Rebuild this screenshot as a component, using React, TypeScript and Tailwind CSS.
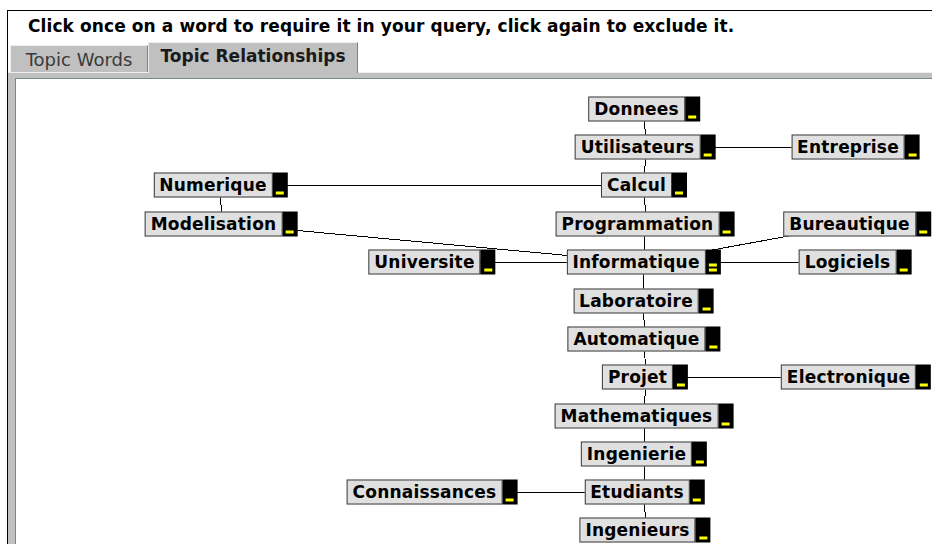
const FONT = { fontFamily: '"DejaVu Sans", "Liberation Sans", sans-serif' };

type Node = { id: string; label: string; x: number; y: number; double?: boolean };

// page coordinates of each node's centre; the canvas starts at (16, 79)
const nodes: Node[] = [
  { id: "don", label: "Donnees", x: 644, y: 109 },
  { id: "uti", label: "Utilisateurs", x: 645, y: 147 },
  { id: "ent", label: "Entreprise", x: 855.5, y: 147 },
  { id: "cal", label: "Calcul", x: 644, y: 185 },
  { id: "num", label: "Numerique", x: 220.5, y: 185 },
  { id: "mod", label: "Modelisation", x: 221, y: 223.5 },
  { id: "pro", label: "Programmation", x: 645, y: 223.5 },
  { id: "bur", label: "Bureautique", x: 857, y: 223.5 },
  { id: "uni", label: "Universite", x: 432, y: 262 },
  { id: "inf", label: "Informatique", x: 643.5, y: 262, double: true },
  { id: "log", label: "Logiciels", x: 855, y: 262 },
  { id: "lab", label: "Laboratoire", x: 643.5, y: 300.5 },
  { id: "aut", label: "Automatique", x: 644, y: 338.5 },
  { id: "prj", label: "Projet", x: 645, y: 377 },
  { id: "ele", label: "Electronique", x: 856, y: 377 },
  { id: "mat", label: "Mathematiques", x: 644, y: 415.5 },
  { id: "ing", label: "Ingenierie", x: 644, y: 453.5 },
  { id: "con", label: "Connaissances", x: 432, y: 492 },
  { id: "etu", label: "Etudiants", x: 644.5, y: 492 },
  { id: "igs", label: "Ingenieurs", x: 645, y: 530 },
];

const edges: [string, string][] = [
  ["don", "uti"],
  ["uti", "ent"],
  ["uti", "cal"],
  ["cal", "num"],
  ["num", "mod"],
  ["cal", "pro"],
  ["pro", "inf"],
  ["mod", "inf"],
  ["uni", "inf"],
  ["bur", "inf"],
  ["log", "inf"],
  ["inf", "lab"],
  ["lab", "aut"],
  ["aut", "prj"],
  ["prj", "ele"],
  ["prj", "mat"],
  ["mat", "ing"],
  ["ing", "etu"],
  ["etu", "con"],
  ["etu", "igs"],
];

const OX = 16;
const OY = 79;

function WordNode({ node }: { node: Node }) {
  return (
    <div
      className="absolute flex h-[25px] -translate-x-1/2 -translate-y-1/2"
      style={{ left: node.x - OX, top: node.y - OY }}
    >
      <span className="border border-[#3c3c3c] bg-[#e0e0e0] px-[5px] text-[17px] font-bold leading-[23px] tracking-[0.2px] text-black whitespace-nowrap">
        {node.label}
      </span>
      <span className="flex w-[15px] flex-col items-center justify-end gap-[2px] bg-black pb-[3px]">
        {node.double && <span className="h-[3px] w-[8px] bg-[#ffff00]" />}
        <span className="h-[3px] w-[8px] bg-[#ffff00]" />
      </span>
    </div>
  );
}

export default function App() {
  const byId = Object.fromEntries(nodes.map((n) => [n.id, n]));

  return (
    <div className="h-[544px] w-[932px] overflow-hidden bg-white" style={FONT}>
      <div className="ml-[7px] mt-[10px] h-[600px] w-[1000px] border-l border-t border-black bg-white">

        {/* Hint */}
        <div className="flex h-[31px] items-center pl-[20px] text-[17px] font-bold tracking-[0.1px] text-black">
          Click once on a word to require it in your query, click again to exclude it.
        </div>

        {/* Tabs */}
        <div className="flex h-[30px] items-end pl-[2px]">
          <div className="flex h-[27px] w-[138px] items-center justify-center border-l border-t border-r border-l-[#eeeeee] border-t-[#eeeeee] border-r-[#808080] bg-[#c0c0c0] text-[18px] text-[#3a3a3a]">
            Topic Words
          </div>
          <div className="relative z-10 -mb-px flex h-[31px] w-[210px] items-center justify-center border-l border-t border-r border-l-[#eeeeee] border-t-[#eeeeee] border-r-[#808080] bg-[#c0c0c0] pb-[2px] text-[17px] font-bold text-[#1a1a1a]">
            Topic Relationships
          </div>
        </div>

        {/* Panel */}
        <div className="h-[560px] border-t border-[#eeeeee] bg-[#c0c0c0] pl-[7px] pt-[5px]">
          <div className="relative h-full border-l border-t border-[#7a8a7a] bg-white">
            <svg className="absolute left-0 top-0" width="1000" height="560" shapeRendering="crispEdges">
              {edges.map(([a, b]) => {
                const p = byId[a];
                const q = byId[b];
                return (
                  <line
                    key={a + b}
                    x1={Math.floor(p.x) - OX + 0.5}
                    y1={Math.floor(p.y) - OY + 0.5}
                    x2={Math.floor(q.x) - OX + 0.5}
                    y2={Math.floor(q.y) - OY + 0.5}
                    stroke="#000"
                    strokeWidth="1"
                  />
                );
              })}
            </svg>
            {nodes.map((n) => (
              <WordNode key={n.id} node={n} />
            ))}
          </div>
        </div>
      </div>
    </div>
  );
}
